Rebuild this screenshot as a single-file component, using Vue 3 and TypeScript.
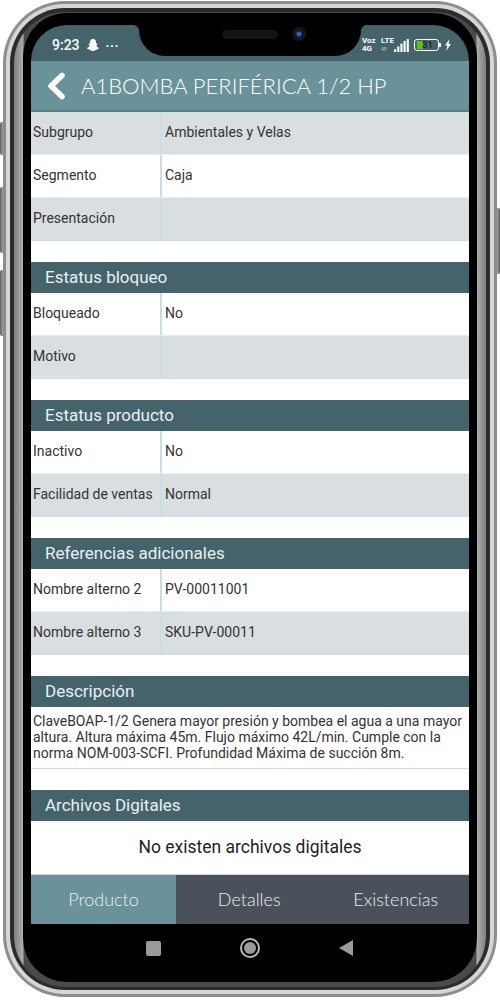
<template>
  <div class="page">
    <span class="side-btn left b1"></span>
    <span class="side-btn left b2"></span>
    <span class="side-btn left b3"></span>
    <span class="side-btn right b4"></span>
    <div class="phone">
      <div class="ring-light">
        <div class="ring-dark">
          <div class="ring-metal">
            <div class="bezel">
              <div class="screen">
                <div class="status">
                  <div class="status-left">
                    <span class="clock">9:23</span>
                    <svg class="ghost" viewBox="0 0 16 16" width="14" height="14">
                      <path fill="#fff" d="M8 1C5.600 1 4.400 2.800 4.400 5v1.600l-1.300-.3-.5.8 1.500 1C3.700 9.800 2.800 11 1 11.500c.1.900 1.300 1 2.200 1.200l.4 1 1.400-.1c1 .2 1.700 1.400 3 1.400s2-1.200 3-1.400l1.400.1.400-1c.9-.2 2.100-.3 2.200-1.200-1.800-.5-2.700-1.700-3.100-3.400l1.500-1-.5-.8-1.300.3V5C11.600 2.800 10.400 1 8 1z" />
                    </svg>
                    <span class="dots">···</span>
                  </div>
                  <div class="notch">
                    <span class="speaker"></span>
                    <span class="camera"></span>
                  </div>
                  <div class="status-right">
                    <span class="net">Voz<br />4G</span>
                    <span class="net lte">LTE<br /><i>4P</i></span>
                    <svg class="bars" viewBox="0 0 16 14" width="15" height="13">
                      <rect v-for="(h, i) in barHeights" :key="i" :x="i * 3.4" :y="14 - h" width="2.300" :height="h" fill="#fff" />
                    </svg>
                    <div class="battery">
                      <span class="charge"></span>
                      <span class="level">31</span>
                    </div>
                    <svg class="bolt" viewBox="0 0 8 12" width="8" height="12">
                      <path fill="#fff" d="M5.500 0 1 6.500h2.500L2 12l5-7H4.500z" />
                    </svg>
                  </div>
                </div>

                <header class="topbar">
                  <svg class="back" viewBox="0 0 20 28" width="20" height="28">
                    <path d="M16 3.500 5 14l11 10.500" fill="none" stroke="#fff" stroke-width="5.500" stroke-linecap="round" stroke-linejoin="round" />
                  </svg>
                  <h1>A1BOMBA PERIFÉRICA 1/2 HP</h1>
                </header>

                <main class="content">
                  <section v-for="(sec, s) in sections" :key="s" class="section">
                    <h2 v-if="sec.title">{{ sec.title }}</h2>
                    <div
                      v-for="(row, r) in sec.rows"
                      :key="r"
                      class="row"
                      :class="{ shaded: (r + sec.offset) % 2 === 0 }"
                    >
                      <div class="label">{{ row[0] }}</div>
                      <div class="value">{{ row[1] }}</div>
                    </div>
                  </section>

                  <section class="section">
                    <h2>Descripción</h2>
                    <p class="desc">
                      ClaveBOAP-1/2 Genera mayor presión y bombea el agua a una mayor altura. Altura máxima 45m. Flujo máximo 42L/min. Cumple con la norma NOM-003-SCFI. Profundidad Máxima de succión 8m.
                    </p>
                  </section>

                  <section class="section last">
                    <h2>Archivos Digitales</h2>
                    <p class="empty">No existen archivos digitales</p>
                  </section>
                </main>

                <nav class="tabs">
                  <div v-for="(t, i) in tabs" :key="t" class="tab" :class="{ active: i === 0 }">{{ t }}</div>
                </nav>
              </div>

              <div class="softkeys">
                <span class="key-square"></span>
                <span class="key-circle"><i></i></span>
                <span class="key-back"></span>
              </div>
            </div>
          </div>
        </div>
      </div>
    </div>
  </div>
</template>

<script setup lang="ts">
const barHeights = [3, 6, 9, 12, 14];

const tabs = ["Producto", "Detalles", "Existencias"];

const sections = [
  {
    title: "",
    offset: 0,
    rows: [
      ["Subgrupo", "Ambientales y Velas"],
      ["Segmento", "Caja"],
      ["Presentación", ""],
    ],
  },
  {
    title: "Estatus bloqueo",
    offset: 1,
    rows: [
      ["Bloqueado", "No"],
      ["Motivo", ""],
    ],
  },
  {
    title: "Estatus producto",
    offset: 1,
    rows: [
      ["Inactivo", "No"],
      ["Facilidad de ventas", "Normal"],
    ],
  },
  {
    title: "Referencias adicionales",
    offset: 1,
    rows: [
      ["Nombre alterno 2", "PV-00011001"],
      ["Nombre alterno 3", "SKU-PV-00011"],
    ],
  },
];
</script>

<style>
html,
body {
  background: #fff;
}
</style>

<style scoped>
.page {
  position: relative;
  width: 500px;
  height: 1000px;
  overflow: hidden;
  padding: 1px 3px 3px;
  box-sizing: border-box;
  font-family: Roboto, "Liberation Sans", sans-serif;
}
.side-btn {
  position: absolute;
  width: 4px;
  background: linear-gradient(90deg, #5e5e5e, #b9b9b9);
  border-radius: 2px 0 0 2px;
}
.side-btn.left {
  left: 0;
}
.side-btn.right {
  right: 0;
  transform: scaleX(-1);
}
.b1 {
  top: 122px;
  height: 33px;
}
.b2 {
  top: 187px;
  height: 66px;
}
.b3 {
  top: 270px;
  height: 66px;
}
.b4 {
  top: 208px;
  height: 66px;
}
.phone {
  position: relative;
  height: 100%;
  padding: 3px;
  box-sizing: border-box;
  border-radius: 62px;
  background: #8b8d8e;
}
.ring-light {
  height: 100%;
  padding: 4px;
  box-sizing: border-box;
  border-radius: 59px;
  background: #d6d6d6;
}
.ring-dark {
  height: 100%;
  padding: 4px 4px 3px;
  box-sizing: border-box;
  border-radius: 55px;
  background: #2c2c2c;
}
.ring-metal {
  height: 100%;
  padding: 1px 9px 5px;
  box-sizing: border-box;
  border-radius: 51px;
  background: linear-gradient(90deg, #7f7f7f, #adadad 9px, #4a4a4a 10px, #4a4a4a calc(100% - 10px), #adadad calc(100% - 9px), #7f7f7f);
}
.bezel {
  height: 100%;
  padding: 12px 8px 0;
  box-sizing: border-box;
  border-radius: 44px;
  background: #000;
  display: flex;
  flex-direction: column;
}
.screen {
  display: flex;
  flex-direction: column;
  height: 899px;
  border-radius: 36px 36px 0 0;
  overflow: hidden;
}
.status {
  display: flex;
  height: 36px;
  flex-shrink: 0;
  background: #44636a;
  color: #fff;
}
.status-left {
  width: 108px;
  padding: 4px 0 0 21px;
  box-sizing: border-box;
  display: flex;
  align-items: center;
  gap: 6px;
  height: 36px;
}
.clock {
  font-size: 14px;
  font-weight: 500;
}
.dots {
  font-size: 13px;
  font-weight: 700;
  letter-spacing: 0.5px;
}
.notch {
  position: relative;
  width: 222px;
  height: 31px;
  flex-shrink: 0;
  background: #000;
  border-radius: 0 0 26px 26px;
}
.notch::before,
.notch::after {
  content: "";
  position: absolute;
  top: 0;
  width: 7px;
  height: 7px;
}
.notch::before {
  left: -7px;
  background: radial-gradient(circle at 0 100%, transparent 7px, #000 7.500px);
}
.notch::after {
  right: -7px;
  background: radial-gradient(circle at 100% 100%, transparent 7px, #000 7.500px);
}
.speaker {
  position: absolute;
  left: 83px;
  top: 5px;
  width: 56px;
  height: 9px;
  border-radius: 5px;
  background: radial-gradient(#3c3c3c 45%, #141414 50%) 0 0 / 2px 2px;
}
.camera {
  position: absolute;
  left: 153px;
  top: 2px;
  width: 14px;
  height: 14px;
  border-radius: 50%;
  background: radial-gradient(circle, #2f62b5 0 2px, #101a2a 3px, #12141a 7px);
}
.status-right {
  flex: 1;
  height: 36px;
  padding: 4px 0 0 1px;
  box-sizing: border-box;
  display: flex;
  align-items: center;
  color: #fff;
}
.net {
  font-size: 8px;
  line-height: 8px;
  font-weight: 700;
  width: 19px;
}
.lte {
  width: 13px;
}
.lte i {
  font-style: normal;
  font-size: 5px;
  font-weight: 400;
  opacity: 0.6;
}
.battery {
  position: relative;
  width: 25px;
  height: 12px;
  margin-left: 5px;
  border: 1px solid #fff;
  border-radius: 3px;
  box-sizing: border-box;
  font-size: 9.500px;
  font-weight: 500;
  line-height: 10px;
  color: #16262a;
  text-align: center;
}
.battery::after {
  content: "";
  position: absolute;
  right: -3px;
  top: 2.500px;
  width: 2px;
  height: 4px;
  background: #fff;
}
.charge {
  position: absolute;
  left: 2px;
  top: 1px;
  bottom: 1px;
  width: 6px;
  background: #5fc21c;
}
.level {
  position: relative;
  left: 1px;
}
.bolt {
  margin-left: 5px;
}
.topbar {
  height: 51px;
  flex-shrink: 0;
  display: flex;
  align-items: center;
  gap: 15px;
  padding: 0 0 0 15px;
  box-sizing: border-box;
  background: #6a929a;
  border-bottom: 2px solid #5a8188;
  color: #fff;
}
.back {
  flex-shrink: 0;
}
.topbar h1 {
  margin: 0;
  font-family: Lato, "Liberation Sans", sans-serif;
  font-weight: 300;
  font-size: 22px;
  white-space: nowrap;
}
.content {
  flex: 1;
  min-height: 0;
  background: #fff;
}
.section {
  padding-bottom: 21px;
}
.section.last {
  padding-bottom: 0;
}
.section h2 {
  margin: 0;
  height: 31px;
  padding-left: 14px;
  box-sizing: border-box;
  font-size: 17px;
  font-weight: 400;
  line-height: 30px;
  color: #e9f0f1;
  background: #44636a;
}
.row {
  display: flex;
  height: 43px;
  box-sizing: border-box;
  border-bottom: 1px solid #e4edf3;
  font-size: 14px;
  color: #333;
}
.row:last-child {
  border-bottom-color: #c9dcea;
}
.shaded {
  background: #d9dee1;
}
.label {
  width: 129px;
  flex-shrink: 0;
  padding-left: 2px;
  box-sizing: border-box;
  line-height: 41px;
  white-space: nowrap;
}
.value {
  flex: 1;
  padding-left: 3px;
  border-left: 2px solid #c9dcea;
  line-height: 41px;
}
.desc {
  margin: 0;
  height: 62px;
  padding: 6px 2px 0;
  box-sizing: border-box;
  font-size: 14px;
  line-height: 16px;
  color: #333;
  border-bottom: 1px solid #c9dcea;
}
.empty {
  margin: 0;
  text-align: center;
  font-size: 17.500px;
  line-height: 53px;
  color: #222;
}
.tabs {
  display: flex;
  height: 50px;
  flex-shrink: 0;
  background: #4a515b;
  border-top: 1px solid #d5d8da;
  box-sizing: border-box;
}
.tab {
  flex: 1;
  text-align: center;
  font-family: Lato, "Liberation Sans", sans-serif;
  font-weight: 300;
  font-size: 18px;
  line-height: 48px;
  color: #eceef0;
}
.tab.active {
  flex: 0 0 145px;
  background: #6a929a;
}
.softkeys {
  display: flex;
  align-items: center;
  height: 48px;
  padding-left: 115px;
  flex-shrink: 0;
}
.key-square {
  width: 15px;
  height: 15px;
  border-radius: 2px;
  background: #9a9a9a;
}
.key-circle {
  width: 20px;
  height: 20px;
  margin-left: 79px;
  border: 2px solid #b8b8b8;
  border-radius: 50%;
  box-sizing: border-box;
  display: flex;
  align-items: center;
  justify-content: center;
}
.key-circle i {
  width: 12px;
  height: 12px;
  border-radius: 50%;
  background: #9a9a9a;
}
.key-back {
  width: 0;
  height: 0;
  margin-left: 79px;
  border-style: solid;
  border-width: 8px 14px 8px 0;
  border-color: transparent #9a9a9a transparent transparent;
}
</style>
